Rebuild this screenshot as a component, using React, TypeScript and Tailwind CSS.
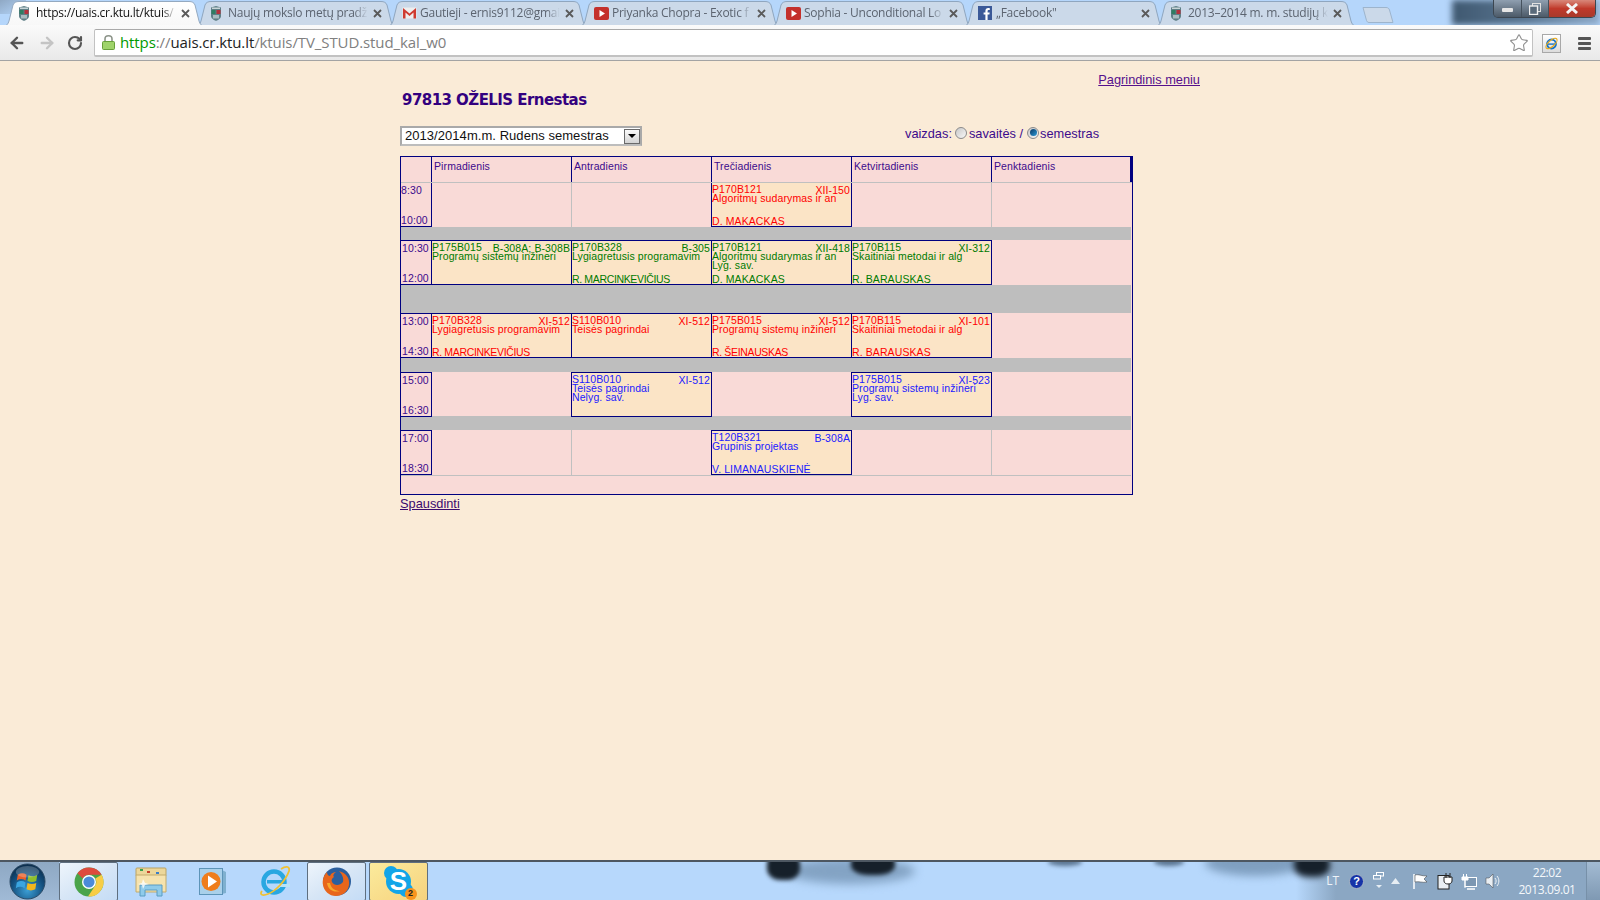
import React from "react";
import { ArrowLeft, ArrowRight, RotateCw, Star } from "lucide-react";

const ui = "font-['Open_Sans',sans-serif]";

function Shield() {
  return (
    <svg width="12" height="15" viewBox="0 0 12 15">
      <path d="M1 1.5 L6 0 L11 1.5 V10 C11 12.5 8 14 6 15 C4 14 1 12.5 1 10 Z" fill="#5f7f86" />
      <rect x="1.5" y="4" width="4" height="4" fill="#2f7d62" />
      <rect x="6.5" y="4" width="4" height="4" fill="#b5303c" />
      <rect x="2" y="1.5" width="8" height="1.5" fill="#c9d5d8" />
      <rect x="3" y="9" width="6" height="3.5" fill="#a9bcc0" />
    </svg>
  );
}
function Gmail() {
  return (
    <svg width="15" height="12" viewBox="0 0 15 12">
      <rect x="0.5" y="0.5" width="14" height="11" fill="#eeeeee" />
      <path d="M1 11.5 V1 L7.5 6.5 L14 1 V11.5 H11.5 V5.5 L7.5 9 L3.5 5.5 V11.5 Z" fill="#cf3b31" />
    </svg>
  );
}
function Yt() {
  return (
    <svg width="15" height="13" viewBox="0 0 15 13">
      <rect width="15" height="13" rx="2" fill="#c4302b" />
      <path d="M5.5 3 L11 6.5 L5.5 10 Z" fill="#ffffff" />
    </svg>
  );
}
function Fb() {
  return (
    <svg width="14" height="14" viewBox="0 0 14 14">
      <rect width="14" height="14" fill="#3b5998" />
      <path d="M9.6 14 V8.6 H11.4 L11.7 6.5 H9.6 V5.2 C9.6 4.5 9.9 4.1 10.7 4.1 H11.8 V2.2 C11.4 2.2 10.8 2.1 10.2 2.1 C8.5 2.1 7.4 3.1 7.4 5 V6.5 H5.6 V8.6 H7.4 V14 Z" fill="#ffffff" />
    </svg>
  );
}

const tabs = [
  { icon: <Shield />, text: "https://uais.cr.ktu.lt/ktuis/", active: true },
  { icon: <Shield />, text: "Naujų mokslo metų pradž" },
  { icon: <Gmail />, text: "Gautieji - ernis9112@gmai" },
  { icon: <Yt />, text: "Priyanka Chopra - Exotic f" },
  { icon: <Yt />, text: "Sophia - Unconditional Lo" },
  { icon: <Fb />, text: "„Facebook\"" },
  { icon: <Shield />, text: "2013–2014 m. m. studijų k" },
];

function Tab({ icon, text, active }: { icon: React.ReactNode; text: string; active?: boolean }) {
  return (
    <div className={`relative h-[24px] w-[202px] shrink-0 -mr-[10px] ${active ? "z-20" : "z-10"}`}>
      <svg className="absolute inset-0" width="202" height="25" viewBox="0 0 202 25">
        <defs>
          <linearGradient id="activeTab" x1="0" y1="0" x2="0" y2="1">
            <stop offset="0" stopColor="#ffffff" />
            <stop offset="1" stopColor="#f7f7f7" />
          </linearGradient>
        </defs>
        <path
          d="M0.5 25 C4 25 5 23 6 20 L10 4 C11 1.5 13 0.5 16 0.5 H186 C189 0.5 191 1.5 192 4 L196 20 C197 23 198 25 201.5 25"
          fill={active ? "url(#activeTab)" : "#cbd9e9"}
          stroke={active ? "#94a9c0" : "#8fa6bf"}
          strokeWidth="1"
        />
      </svg>
      <div className="relative flex h-full items-center pl-[15px]">
        <span className="flex w-[18px] shrink-0 items-center">{icon}</span>
        <span
          className={`${ui} w-[140px] overflow-hidden whitespace-nowrap text-[12px] tracking-[-0.25px] [mask-image:linear-gradient(to_right,black_90%,transparent)] ${active ? "text-[#111111]" : "text-[#5c6470]"}`}
        >
          {text}
        </span>
        <span className="ml-[3px] flex w-[12px] justify-center">
          <svg width="9" height="9" viewBox="0 0 9 9">
            <path d="M1 1 L8 8 M8 1 L1 8" stroke="#5a5a5a" strokeWidth="1.8" />
          </svg>
        </span>
      </div>
    </div>
  );
}

function WindowControls() {
  return (
    <div className="relative z-30 ml-auto mr-[4px] flex h-[18px] w-[103px] self-start overflow-hidden rounded-b-[5px] border border-t-0 border-[#3c4650]">
      <div className="flex w-[28px] items-center justify-center border-r border-[#46525e] bg-gradient-to-b from-[#8f9fb0] to-[#4c5a68]">
        <span className="mt-[3px] h-[4px] w-[11px] rounded-[1px] bg-[#e6e6e6]" />
      </div>
      <div className="flex w-[27px] items-center justify-center border-r border-[#46525e] bg-gradient-to-b from-[#8f9fb0] to-[#4c5a68]">
        <svg width="12" height="12" viewBox="0 0 12 12">
          <rect x="3.5" y="0.5" width="8" height="8" fill="none" stroke="#e0e0e0" />
          <rect x="0.5" y="3" width="8" height="8.5" fill="#596a7a" stroke="#f0f0f0" strokeWidth="1.4" />
        </svg>
      </div>
      <div className="flex flex-1 items-center justify-center bg-gradient-to-b from-[#d8877a] via-[#c0392b] to-[#a83a2a]">
        <svg width="14" height="11" viewBox="0 0 14 11">
          <path d="M2 1 L12 10 M12 1 L2 10" stroke="#f4f4f4" strokeWidth="3" />
        </svg>
      </div>
    </div>
  );
}

function TabStrip() {
  return (
    <div className="relative flex h-[25px] items-end overflow-hidden bg-[#b5d6fb] pl-[3px]">
      <div className="absolute left-0 top-0 h-[14px] w-[26px] bg-gradient-to-br from-[#8fa8c4] to-transparent" />
      <div className="absolute left-[1452px] top-0 h-[25px] w-[148px] bg-gradient-to-r from-[#3f5870] via-[#5a7692] to-[#8eaac8] blur-[3px]" />
      {tabs.map((t, i) => (
        <Tab key={i} icon={t.icon} text={t.text} active={t.active} />
      ))}
      <svg className="relative z-10 ml-[15px] mb-[2px] shrink-0" width="32" height="16" viewBox="0 0 32 16">
        <path d="M1 0.5 H24 C26 0.5 27 1.5 27.5 3 L31 15.5 H7 C5.5 15.5 5 14.5 4.5 13.5 Z" fill="#cbd9e9" stroke="#9db4cc" />
      </svg>
      <WindowControls />
    </div>
  );
}

function Lock() {
  return (
    <svg width="13" height="15" viewBox="0 0 13 15">
      <path d="M3 7 V4 C3 2 4.5 0.8 6.5 0.8 C8.5 0.8 10 2 10 4 V7" fill="none" stroke="#8c9489" strokeWidth="1.6" />
      <rect x="0.5" y="6.5" width="12" height="8" rx="1" fill="#9fd36a" stroke="#68a03a" />
    </svg>
  );
}

function IeExt() {
  return (
    <div className="relative ml-[9px] h-[19px] w-[19px] shrink-0 border border-[#a8a8a8] bg-gradient-to-b from-white to-[#dcdcdc]">
      <svg className="absolute left-[1px] top-[1px]" width="15" height="15" viewBox="0 0 15 15">
        <circle cx="7.5" cy="8" r="4.4" fill="none" stroke="#1473c9" strokeWidth="2" />
        <rect x="4" y="7.4" width="7.5" height="1.4" fill="#1473c9" />
        <ellipse cx="7.5" cy="7.5" rx="7" ry="3" transform="rotate(-42 7.5 7.5)" fill="none" stroke="#e8a91c" strokeWidth="1.2" />
      </svg>
    </div>
  );
}

function Toolbar() {
  return (
    <div className="flex h-[36px] items-center border-b border-[#a3a3a3] bg-gradient-to-b from-[#fafafa] to-[#e9e9e9] pt-[1px]">
      <div className="flex w-[94px] shrink-0 items-center">
        <ArrowLeft className="ml-[8px] text-[#555555]" size={18} strokeWidth={3.2} />
        <ArrowRight className="ml-[12px] text-[#c4c4c4]" size={18} strokeWidth={3.2} />
        <RotateCw className="ml-[11px] text-[#555555]" size={16} strokeWidth={3.2} />
      </div>
      <div className="flex h-[28px] w-[1439px] shrink-0 items-center rounded-[2px] border border-b-2 border-[#c2c2c2] border-t-[#a9a9a9] bg-white">
        <span className="ml-[7px] w-[18px] shrink-0"><Lock /></span>
        <span className={`${ui} whitespace-nowrap text-[15px] tracking-[-0.1px] text-[#808080]`}>
          <span className="text-[#009a00]">https</span>
          <span>://</span>
          <span className="text-[#222222]">uais.cr.ktu.lt</span>
          /ktuis/TV_STUD.stud_kal_w0
        </span>
        <Star className="ml-auto mr-[3px] text-[#8e8e8e]" size={20} strokeWidth={1.3} />
      </div>
      <IeExt />
      <div className="ml-[17px] flex w-[13px] shrink-0 flex-col gap-[2px]">
        <span className="h-[3px] rounded-[1px] bg-[#555555]" />
        <span className="h-[3px] rounded-[1px] bg-[#555555]" />
        <span className="h-[3px] rounded-[1px] bg-[#555555]" />
      </div>
    </div>
  );
}

type Tone = "r" | "g" | "b";
const toneClass: Record<Tone, string> = { r: "text-[#ff0000]", g: "text-[#007a00]", b: "text-[#2020ff]" };
const tableFont = "font-['Liberation_Sans',Arial,sans-serif] text-[10.5px] tracking-[0.1px]";

type Course = { code: string; room: string; title: string; extra?: string; name?: string; tone: Tone; tight?: boolean };

function CourseCell({ c, top }: { c: Course; top?: boolean }) {
  return (
    <div
      className={`relative -ml-px flex w-[141px] shrink-0 flex-col overflow-hidden whitespace-nowrap border border-[#000080] bg-[#fbe4c6] pr-px pt-[2px] leading-[9px] ${top ? "border-t-0" : ""} ${toneClass[c.tone]}`}
    >
      <div className="flex justify-between">
        <span>{c.code}</span>
        <span className="relative top-[1px]">{c.room}</span>
      </div>
      <div>{c.title}</div>
      {c.extra && <div>{c.extra}</div>}
      {c.name && <div className={`mt-auto ${c.tight ? "tracking-[-0.35px]" : ""}`}>{c.name}</div>}
    </div>
  );
}

function EmptyCell({ line }: { line?: boolean }) {
  return <div className={`w-[140px] shrink-0 ${line ? "border-r border-[#c0c0c0]" : ""}`} />;
}

function TimeCell({ from, to, top }: { from: string; to: string; top?: boolean }) {
  return (
    <div
      className={`flex w-[31px] shrink-0 flex-col justify-between border-b border-r border-[#000080] leading-[12px] text-[#3c0a8c] ${top ? "pt-[1px]" : "border-t pl-px pt-[1px]"}`}
    >
      <span>{from}</span>
      <span>{to}</span>
    </div>
  );
}

type Slot = Course | null | "line";

function Row({ from, to, slots, first, className }: { from: string; to: string; slots: Slot[]; first?: boolean; className: string }) {
  return (
    <div className={`relative z-10 flex shrink-0 ${className}`}>
      <TimeCell from={from} to={to} top={first} />
      {slots.map((s, i) =>
        s === null ? <EmptyCell key={i} /> : s === "line" ? <EmptyCell key={i} line /> : <CourseCell key={i} c={s} top={first} />
      )}
    </div>
  );
}

const days = ["Pirmadienis", "Antradienis", "Trečiadienis", "Ketvirtadienis", "Penktadienis"];

function Schedule() {
  return (
    <div className={`flex h-[339px] w-[733px] flex-col border border-[#000080] bg-[#f9dad7] ${tableFont}`}>
      <div className="flex h-[26px] shrink-0 border-b border-[#c0c0c0] text-[#3c0a8c]">
        <div className="w-[31px] shrink-0 border-r border-[#000080]" />
        {days.map((d) => (
          <div key={d} className="w-[140px] shrink-0 border-r border-[#000080] pl-[2px] pt-[3px] leading-[12px] last:border-r-2">
            {d}
          </div>
        ))}
      </div>
      <Row
        first
        from="8:30"
        to="10:00"
        className="h-[44px]"
        slots={[
          "line",
          null,
          { code: "P170B121", room: "XII-150", title: "Algoritmų sudarymas ir an", name: "D. MAKACKAS", tone: "r" },
          "line",
          null,
        ]}
      />
      <div className="h-[13px] w-[730px] shrink-0 bg-[#bebebe]" />
      <Row
        from="10:30"
        to="12:00"
        className="h-[45px]"
        slots={[
          { code: "P175B015", room: "B-308A; B-308B", title: "Programų sistemų inžineri", tone: "g" },
          { code: "P170B328", room: "B-305", title: "Lygiagretusis programavim", name: "R. MARCINKEVIČIUS", tone: "g", tight: true },
          { code: "P170B121", room: "XII-418", title: "Algoritmų sudarymas ir an", extra: "Lyg. sav.", name: "D. MAKACKAS", tone: "g" },
          { code: "P170B115", room: "XI-312", title: "Skaitiniai metodai ir alg", name: "R. BARAUSKAS", tone: "g" },
          null,
        ]}
      />
      <div className="h-[28px] w-[730px] shrink-0 bg-[#bebebe]" />
      <Row
        from="13:00"
        to="14:30"
        className="h-[45px]"
        slots={[
          { code: "P170B328", room: "XI-512", title: "Lygiagretusis programavim", name: "R. MARCINKEVIČIUS", tone: "r", tight: true },
          { code: "S110B010", room: "XI-512", title: "Teisės pagrindai", tone: "r" },
          { code: "P175B015", room: "XI-512", title: "Programų sistemų inžineri", name: "R. ŠEINAUSKAS", tone: "r", tight: true },
          { code: "P170B115", room: "XI-101", title: "Skaitiniai metodai ir alg", name: "R. BARAUSKAS", tone: "r" },
          null,
        ]}
      />
      <div className="h-[14px] w-[730px] shrink-0 bg-[#bebebe]" />
      <Row
        from="15:00"
        to="16:30"
        className="h-[45px]"
        slots={[
          null,
          { code: "S110B010", room: "XI-512", title: "Teisės pagrindai", extra: "Nelyg. sav.", tone: "b" },
          null,
          { code: "P175B015", room: "XI-523", title: "Programų sistemų inžineri", extra: "Lyg. sav.", tone: "b" },
          null,
        ]}
      />
      <div className="-mt-px h-[14px] w-[730px] shrink-0 bg-[#bebebe]" />
      <Row
        from="17:00"
        to="18:30"
        className="h-[45px]"
        slots={[
          "line",
          null,
          { code: "T120B321", room: "B-308A", title: "Grupinis projektas", name: "V. LIMANAUSKIENĖ", tone: "b" },
          "line",
          null,
        ]}
      />
      <div className="h-px w-[730px] shrink-0 bg-[#c0c0c0]" />
    </div>
  );
}

function Radio({ on }: { on?: boolean }) {
  return (
    <span className="relative -top-[1px] inline-flex h-[12px] w-[12px] shrink-0 items-center justify-center rounded-full border border-[#8a8a8a] bg-gradient-to-br from-[#c8c8c8] to-[#f8f8f8]">
      {on && <span className="h-[7px] w-[7px] rounded-full bg-gradient-to-br from-[#0b3a66] to-[#2a9bd8]" />}
    </span>
  );
}

function Page() {
  const f = "font-['Liberation_Sans',Arial,sans-serif] text-[12.8px]";
  return (
    <div className={`flex-1 bg-[#faebd7] pl-[400px] text-[#3c0a8c] ${f}`}>
      <div className="flex w-[800px] justify-end pt-[11px]">
        <a className="leading-[15px] text-[#55108c] underline">Pagrindinis meniu</a>
      </div>
      <h1 className="ml-[2px] mt-[3px] font-['DejaVu_Sans',Verdana,sans-serif] text-[15px] font-bold leading-[20px] tracking-[-0.55px] text-[#33007f]">
        97813 OŽELIS Ernestas
      </h1>
      <div className="mt-[16px] flex h-[20px] w-[733px] items-center">
        <div className="flex h-[20px] w-[242px] shrink-0 items-center justify-between border-2 border-[#a9a9a9] border-b-[#bdbdbd] bg-white pl-[3px] text-[13px] tracking-[0.05px] text-[#111111]">
          <span className="whitespace-nowrap">2013/2014m.m. Rudens semestras</span>
          <span className="flex h-[15px] w-[16px] items-center justify-center border border-[#6a6a6a] bg-gradient-to-b from-[#fafafa] to-[#d4d4d4]">
            <span className="h-0 w-0 border-x-[4px] border-t-[4px] border-x-transparent border-t-black" />
          </span>
        </div>
        <div className="ml-[263px] flex items-center whitespace-nowrap pb-[5px] leading-[15px]">
          <span className="mr-[3px]">vaizdas:</span>
          <Radio />
          <span className="ml-[2px] mr-[4px]">savaitės /</span>
          <Radio on />
          <span className="ml-[1px]">semestras</span>
        </div>
      </div>
      <div className="mt-[10px]">
        <Schedule />
      </div>
      <a className="mt-[1px] block leading-[15px] text-[#3a0a6e] underline">Spausdinti</a>
    </div>
  );
}

function StartOrb() {
  return (
    <svg width="37" height="37" viewBox="0 0 38 38">
      <defs>
        <radialGradient id="orb" cx="0.5" cy="0.75" r="0.75">
          <stop offset="0" stopColor="#3b9fd6" />
          <stop offset="0.6" stopColor="#14507f" />
          <stop offset="1" stopColor="#0a2a48" />
        </radialGradient>
      </defs>
      <circle cx="19" cy="19" r="18" fill="url(#orb)" stroke="#2b4a66" />
      <path d="M9 12 C12 10 15 10 18 12 L17 18 C14 16 11 16 8 18 Z" fill="#e8602a" />
      <path d="M20 12.5 C23 14 26 14 29 12 L28 18.5 C25 20 22 20 19 18.5 Z" fill="#8fc02c" />
      <path d="M8 20 C11 18 14 18 17 20 L16 26 C13 24 10 24 7 26 Z" fill="#3aa5e0" />
      <path d="M19 20.5 C22 22 25 22 28 20.5 L27 27 C24 28.5 21 28.5 18 27 Z" fill="#f3b71c" />
      <ellipse cx="19" cy="9" rx="12" ry="6" fill="#ffffff" opacity="0.22" />
    </svg>
  );
}
function ChromeLogo() {
  return (
    <svg width="30" height="30" viewBox="0 0 30 30">
      <circle cx="15" cy="15" r="14.5" fill="#4aa44a" />
      <path d="M15 0.5 A14.5 14.5 0 0 1 27.6 7.8 L15 7.8 A7.2 7.2 0 0 0 8.7 11.4 L3.4 6.3 A14.5 14.5 0 0 1 15 0.5 Z" fill="#dd4b3e" />
      <path d="M27.6 7.8 A14.5 14.5 0 0 1 14 29.5 L21.3 18.6 A7.2 7.2 0 0 0 21.3 11.4 Z" fill="#f7cd46" />
      <circle cx="15" cy="15" r="7" fill="#ffffff" />
      <circle cx="15" cy="15" r="5.6" fill="#4b8bd8" />
    </svg>
  );
}
function FolderIcon() {
  return (
    <svg width="32" height="32" viewBox="0 0 32 32">
      <rect x="1" y="3" width="30" height="8" rx="1" fill="#ecd79a" stroke="#b9a364" />
      <rect x="5" y="4" width="3" height="2" fill="#3aa04a" />
      <rect x="12" y="6" width="3" height="2" fill="#c8402a" />
      <rect x="21" y="7" width="3" height="2" fill="#3a7fc8" />
      <path d="M1 10 H31 V27 H1 Z" fill="#f6e3ae" stroke="#c2ab6c" />
      <path d="M5 31 V20 H27 V31 H22 V25 H10 V31 Z" fill="#8fcbea" stroke="#5b9cc2" />
      <path d="M8 14 L10 18 L14 19 L10 20 L8 24 L7 20 L3 19 L7 18 Z" fill="#ffffff" opacity="0.8" />
    </svg>
  );
}
function MediaIcon() {
  return (
    <svg width="30" height="30" viewBox="0 0 30 30">
      <path d="M24 4 L28 6 V27 L24 28 Z" fill="#7fb0cf" />
      <rect x="1.5" y="2.5" width="23" height="26" fill="#a9d0ea" stroke="#5d94b8" />
      <circle cx="13" cy="15.5" r="9.5" fill="#ef7d1c" />
      <path d="M10 9.5 L19 15.5 L10 21.5 Z" fill="#ffffff" />
    </svg>
  );
}
function IeIcon() {
  return (
    <svg width="32" height="32" viewBox="0 0 32 32">
      <circle cx="15" cy="17" r="10.5" fill="none" stroke="#29a7e1" strokeWidth="4.5" />
      <rect x="8" y="15" width="16" height="3.5" fill="#29a7e1" />
      <rect x="19" y="19" width="12" height="3" fill="#b9e3f7" />
      <path d="M3 26 C0 30 4 31 9 29 C17 26 27 15 30 6 C31 2 28 0 22 4" fill="none" stroke="#f0c030" strokeWidth="1.8" />
    </svg>
  );
}
function FirefoxIcon() {
  return (
    <svg width="31" height="31" viewBox="0 0 31 31">
      <circle cx="16" cy="15.5" r="14" fill="#2b5f9e" />
      <path d="M18 5 C25 7 29 12 28 19 C27 26 21 30 15 30 C8 30 3 25 2 19 C1 14 3 9 6 6 C6 9 8 10 9 10 C10 7 13 6 15 6 C12 8 12 10 13 11 C11 12 10 14 11 16 C13 20 19 20 22 16 C23 12 21 8 18 5 Z" fill="#e8661c" />
      <path d="M6 17 C7 24 13 27 19 25 C15 25 10 23 9 17 Z" fill="#f7a82c" />
    </svg>
  );
}
function SkypeIcon() {
  return (
    <div className="relative h-[32px] w-[32px]">
      <svg className="absolute inset-0" width="32" height="32" viewBox="0 0 32 32">
        <circle cx="15.5" cy="15.5" r="12.5" fill="#12a5e8" />
        <circle cx="8" cy="7" r="7" fill="#12a5e8" />
        <circle cx="23" cy="24" r="7" fill="#12a5e8" />
      </svg>
      <span className="absolute inset-0 flex items-center justify-center pb-[2px] font-['Liberation_Sans',Arial,sans-serif] text-[26px] font-bold leading-none text-white">S</span>
      <span className="absolute -bottom-[2px] -right-[2px] flex h-[12px] w-[12px] items-center justify-center rounded-full bg-[#f7941d] font-['Liberation_Sans',Arial,sans-serif] text-[9px] font-bold leading-none text-[#222222]">2</span>
    </div>
  );
}

function TaskButton({ lit, className, children }: { lit?: boolean; className?: string; children: React.ReactNode }) {
  return (
    <div
      className={`flex h-[39px] w-[59px] shrink-0 items-center justify-center rounded-[2px] border border-[#5f6f7f] ${lit ? "bg-gradient-to-br from-[#fbeb9c] to-[#f6d27e]" : "bg-gradient-to-br from-[#eef5fc] via-[#d7e6f6] to-[#c4dcf6]"} ${className ?? ""}`}
    >
      {children}
    </div>
  );
}

function IconSlot({ w, children, className }: { w: string; children: React.ReactNode; className?: string }) {
  return <div className={`flex shrink-0 items-center justify-center ${w} ${className ?? ""}`}>{children}</div>;
}

function Tray() {
  return (
    <div className="relative z-10 ml-auto flex h-full items-center text-white">
      <span className={`${ui} mr-[10px] text-[12px] text-[#eef3f8]`}>LT</span>
      <span className="mr-[9px] flex h-[15px] w-[15px] items-center justify-center rounded-full border border-[#aab7c4] bg-[#1633a8] font-['Liberation_Sans',Arial,sans-serif] text-[11px] font-bold leading-none text-white">?</span>
      <svg className="mr-[6px]" width="12" height="18" viewBox="0 0 12 18">
        <rect x="3.5" y="0.5" width="7" height="3.5" fill="none" stroke="#fff" />
        <rect x="0.5" y="3.5" width="7" height="3.5" fill="#8aa6c2" stroke="#fff" />
        <path d="M3 13 H9 L6 16 Z" fill="#e6edf3" />
      </svg>
      <svg className="mr-[12px]" width="9" height="6" viewBox="0 0 9 6"><path d="M0 6 L4.5 0 L9 6 Z" fill="#e6edf3" /></svg>
      <svg className="mr-[8px]" width="17" height="17" viewBox="0 0 17 17">
        <path d="M2 1 V16" stroke="#fff" strokeWidth="1.5" />
        <path d="M3 2 C7 1 9 3 15 3 L12 6 L15 9 C10 10 7 8 3 9 Z" fill="#fff" stroke="#333" strokeWidth="0.5" />
      </svg>
      <svg className="mr-[8px]" width="16" height="17" viewBox="0 0 16 17">
        <rect x="1" y="2.5" width="11" height="13.5" fill="#e9eef3" stroke="#222" />
        <path d="M9 0 V5 M13 0 V5 M7 4 H15 V8 C15 10 13 11 11 11 C9 11 7 10 7 8 Z" fill="#fff" stroke="#222" />
      </svg>
      <svg className="mr-[8px]" width="16" height="17" viewBox="0 0 16 17">
        <rect x="4" y="4.5" width="11.5" height="9" fill="#7c97b2" stroke="#fff" />
        <path d="M6 16 H14" stroke="#fff" strokeWidth="1.5" />
        <path d="M2.5 1 V4 M5.5 1 V4 M1 4 H7 V7 H1 Z M4 7 V15" fill="#fff" stroke="#fff" />
      </svg>
      <svg className="mr-[16px]" width="16" height="16" viewBox="0 0 16 16">
        <path d="M1 5 H4 L8 1 V15 L4 11 H1 Z" fill="#e9eef3" stroke="#444" strokeWidth="0.5" />
        <path d="M10 5 C11.5 7 11.5 9 10 11 M12 3 C14.5 6 14.5 10 12 13" fill="none" stroke="#f0f4f8" />
      </svg>
      <div className={`${ui} mr-[9px] w-[60px] text-center text-[12px] leading-[17px] tracking-[-0.4px] text-[#f5f8fb]`}>
        <div>22:02</div>
        <div>2013.09.01</div>
      </div>
      <div className="h-full w-[14px] border-l border-[#7790a8] bg-gradient-to-b from-[#a3bbd3] to-[#7f99b3]" />
    </div>
  );
}

function Taskbar() {
  return (
    <div className="relative flex h-[40px] shrink-0 items-stretch overflow-hidden border-t-2 border-t-[#4d5761] bg-[#b7d8fc]">
      <div className="absolute left-[1320px] top-0 h-[40px] w-[280px] bg-[#8ba7c3]" />
      <div className="absolute left-[1296px] top-0 h-[40px] w-[40px] bg-gradient-to-r from-[#b7d8fc] to-[#8ba7c3]" />
      <div className="absolute left-[785px] -top-[4px] h-[26px] w-[130px] rounded-[50%] bg-[#83a3c4] blur-[5px]" />
      <div className="absolute left-[767px] -top-[10px] h-[28px] w-[33px] rounded-[40%] bg-[#16202a] blur-[2px]" />
      <div className="absolute left-[851px] -top-[10px] h-[23px] w-[44px] rounded-[40%] bg-[#16202a] blur-[2px]" />
      <div className="absolute left-[1048px] -top-[4px] h-[8px] w-[34px] rounded-[50%] bg-[#5a7490] blur-[2px]" />
      <div className="absolute left-[1154px] -top-[4px] h-[8px] w-[30px] rounded-[50%] bg-[#5a7490] blur-[2px]" />
      <div className="absolute left-[1205px] -top-[12px] h-[26px] w-[100px] rounded-[50%] bg-[#7f9fc0] blur-[4px]" />
      <div className="absolute left-[1294px] -top-[10px] h-[25px] w-[36px] rounded-[40%] bg-[#16202a] blur-[3px]" />
      <div className="relative z-10 flex h-full w-[59px] shrink-0 items-center justify-center bg-gradient-to-b from-[#8ea8c3] to-[#a0bad6] pr-[5px]">
        <StartOrb />
      </div>
      <div className="relative z-10 flex h-full">
        <TaskButton><ChromeLogo /></TaskButton>
        <IconSlot w="w-[64px]" className="ml-[1px]"><FolderIcon /></IconSlot>
        <IconSlot w="w-[60px]"><MediaIcon /></IconSlot>
        <IconSlot w="w-[64px]"><IeIcon /></IconSlot>
        <TaskButton><FirefoxIcon /></TaskButton>
        <TaskButton lit className="ml-[3px]"><SkypeIcon /></TaskButton>
      </div>
      <Tray />
    </div>
  );
}

export default function App() {
  return (
    <div className="flex h-[900px] w-[1600px] flex-col overflow-hidden">
      <TabStrip />
      <Toolbar />
      <Page />
      <Taskbar />
    </div>
  );
}
